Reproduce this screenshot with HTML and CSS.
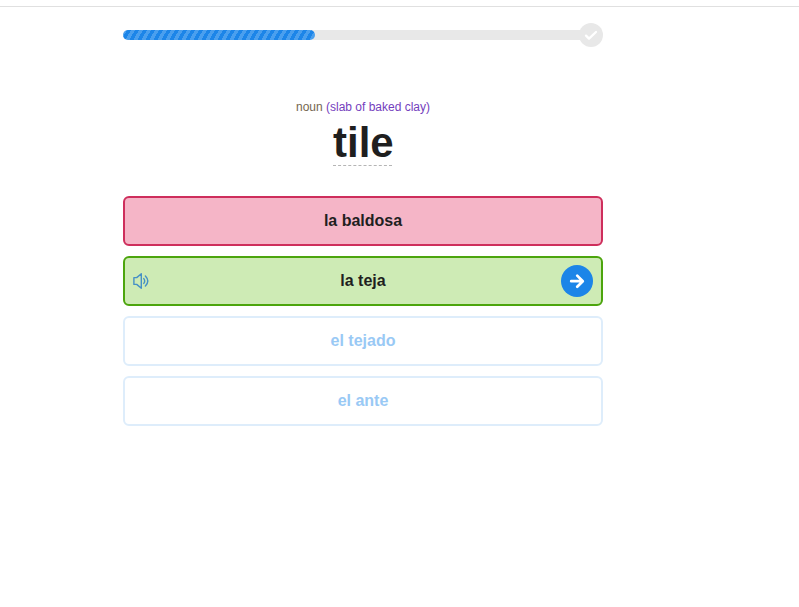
FILE: index.html
```html
<!DOCTYPE html>
<html lang="en">
<head>
<meta charset="utf-8">
<title>Quiz</title>
<link rel="stylesheet" href="styles.css">
</head>
<body>
<header class="topbar"></header>
<main class="quiz">
  <div class="progress">
    <div class="track"><div class="fill"></div></div>
    <svg class="goal" viewBox="0 0 24 24"><circle cx="12" cy="12" r="12"/><path d="M7 12.6l3 3 7-6.6"/></svg>
  </div>
  <p class="context">noun <span class="sense">(slab of baked clay)</span></p>
  <h1 class="word"><span class="term">tile</span></h1>
  <div class="answers">
    <button class="answer wrong">la baldosa</button>
    <button class="answer right">
      <svg class="speaker" viewBox="0 0 18 18"><path d="M1.9 5.6h2.8L9.3 1.8v14.4l-4.6-3.8H1.9z"/><path d="M11.8 6.6q1.8 2.4 0 4.8M13.4 4q4.8 5 0 10"/></svg>
      <span>la teja</span>
      <svg class="next" viewBox="0 0 32 32"><circle cx="16" cy="16" r="16"/><path d="M10.2 16.2h11.5M16.2 10.6l5.6 5.6-5.6 5.6"/></svg>
    </button>
    <button class="answer faded">el tejado</button>
    <button class="answer faded">el ante</button>
  </div>
</main>
</body>
</html>
```
FILE: styles.css
```css
* { box-sizing: border-box; }
body { margin: 0; background: #fff; color: #1f1f1f; font-family: "Liberation Sans", Arial, sans-serif; }
.topbar { height: 7px; border-bottom: 1px solid #e0e0e0; }
.quiz { width: 480px; margin: 16px 0 0 123px; }
.progress { display: flex; align-items: center; height: 24px; }
.track { flex: 1; height: 10px; border-radius: 5px 0 0 5px; background: #e8e8e8; margin-right: -2px; }
.fill { width: 192px; height: 10px; border-radius: 5px; background: repeating-linear-gradient(120deg, #4a9fee 0 3.46px, #1c85e8 3.46px 6.93px); }
.goal { width: 24px; height: 24px; fill: #e8e8e8; }
.goal path { fill: none; stroke: #fff; stroke-width: 2.3; stroke-linecap: round; stroke-linejoin: round; }
.context { margin: 53px 0 0; font-size: 12px; line-height: 14px; text-align: center; color: #75664f; }
.sense { color: #7440bd; }
.word { margin: 8px 0 0; padding-right: 1px; height: 44px; font-size: 42px; line-height: 42px; text-align: center; }
.term { display: inline-block; height: 44px; width: 59px; border-bottom: 1px dashed #b5b5b5; }
.answers { display: grid; gap: 10px; margin-top: 30px; }
.answer { display: flex; align-items: center; justify-content: center; height: 50px; padding: 0 8px; border: 2px solid; border-radius: 6px; background: #fff; color: #1f1f1f; font: bold 16px/20px "Liberation Sans", Arial, sans-serif; }
.wrong { background: #f5b5c7; border-color: #ce2e5c; }
.right { justify-content: space-between; padding-left: 7px; background: #ceebb5; border-color: #4ca50d; }
.right span { flex: 1; margin-left: 15px; }
.faded { color: #99c9f5; border-color: #deedfb; }
.speaker { width: 18px; height: 18px; fill: none; stroke: #4590c6; stroke-width: 1.4; stroke-linejoin: round; stroke-linecap: round; }
.next { width: 32px; height: 32px; fill: #1c85e8; }
.next path { fill: none; stroke: #fff; stroke-width: 2.7; stroke-linecap: round; stroke-linejoin: round; }
```
